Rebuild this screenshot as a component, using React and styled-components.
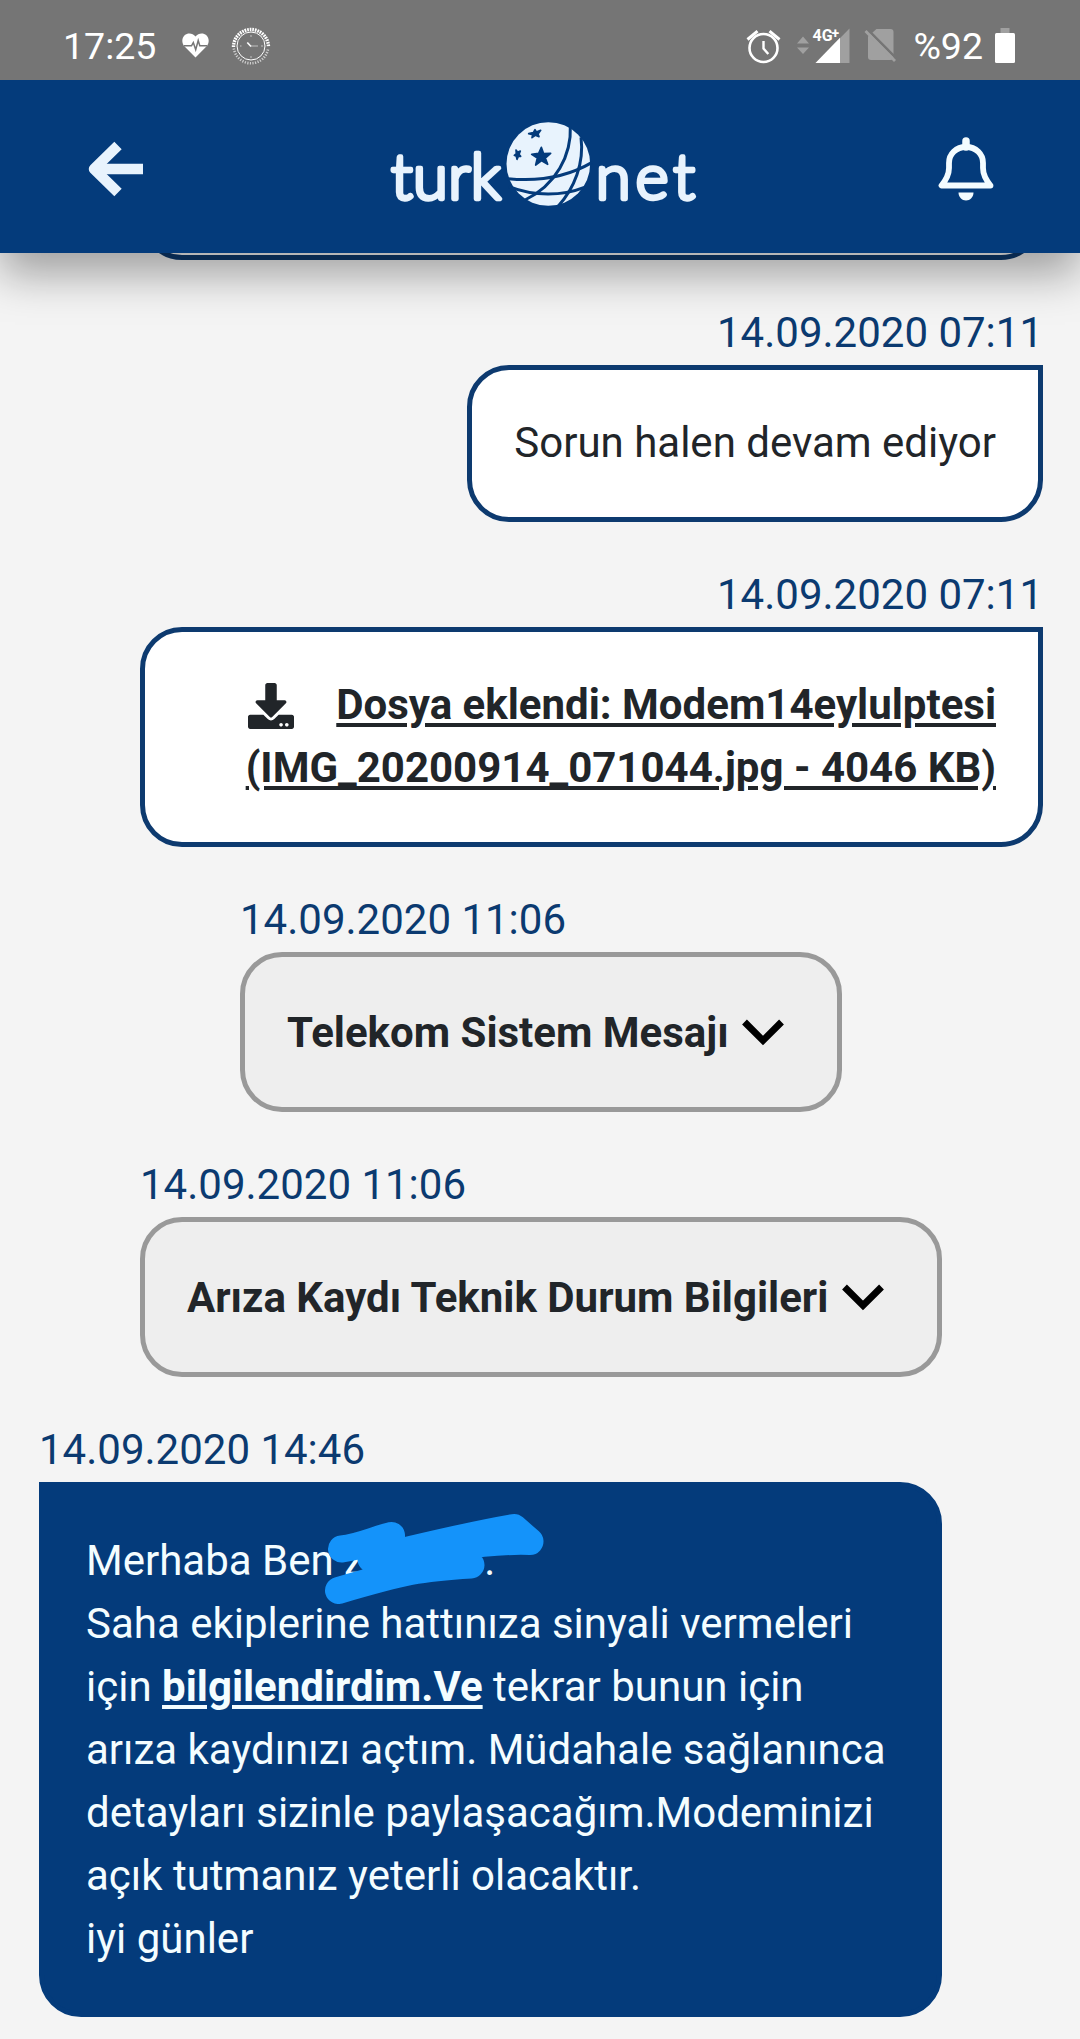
import styled, { createGlobalStyle } from "styled-components";
import { FaDownload } from "react-icons/fa";

const mesajlar = [
  { id: 1, tarih: "14.09.2020 07:11", tip: "musteri", icerik: "Sorun halen devam ediyor" },
  {
    id: 2,
    tarih: "14.09.2020 07:11",
    tip: "dosya",
    icerik: "Dosya eklendi: Modem14eylulptesi (IMG_20200914_071044.jpg - 4046 KB)",
  },
  { id: 3, tarih: "14.09.2020 11:06", tip: "sistem", girinti: 201, genislik: 602, icerik: "Telekom Sistem Mesajı" },
  { id: 4, tarih: "14.09.2020 11:06", tip: "sistem", girinti: 101, genislik: 802, icerik: "Arıza Kaydı Teknik Durum Bilgileri" },
  { id: 5, tarih: "14.09.2020 14:46", tip: "temsilci" },
];

const StatusBar = () => (
  <Status>
    <StatusGroup>
      <span>17:25</span>
      <HeartIcon width="27" height="25" viewBox="0 0 27 25">
        <path d="M13.5 24.5 2.6 13.6C-.6 10-.3 5 2.6 2.3 5.8-.6 10.700 0 13.5 3.500 16.300 0 21.200-.6 24.400 2.300 27.300 5 27.600 10 24.400 13.600Z" fill="#fff" />
        <path d="M2 12.800H9.500L11.300 9.600 13.700 16.600 16.200 7.500 17.800 12.800H25" fill="none" stroke="#757575" strokeWidth="1.500" />
      </HeartIcon>
      <WatchIcon width="40" height="40" viewBox="0 0 40 40" fill="none" stroke="#fff">
        <path d="M2.500 21A17.500 17.500 0 0 1 37.500 21" strokeWidth="3.400" strokeDasharray="1.700 .9" />
        <path d="M2.800 22.500A17.400 17.400 0 0 0 37.200 22.500" strokeWidth="2.600" strokeDasharray="1.200 1.400" opacity=".65" />
        <circle cx="20" cy="20" r="14" strokeWidth="1" />
        <path d="M20 20.500 16.300 16.500" strokeWidth="1.600" />
        <path d="M20 20H27M20 9V11M20 30V32M9 20H10.500M30 20H32" strokeWidth=".8" opacity=".7" />
      </WatchIcon>
    </StatusGroup>
    <StatusGroup>
      <svg width="36" height="36" viewBox="0 0 36 36" fill="none" stroke="#fff">
        <circle cx="17.500" cy="20" r="14" strokeWidth="2.600" />
        <path d="M17.500 13V20.500L22.300 26" strokeWidth="2.400" />
        <path d="M1.500 11.500 11.500 3.200M33.500 11.500 23.500 3.200" strokeWidth="3" />
      </svg>
      <SignalIcon width="53" height="36" viewBox="0 0 53 36">
        <path d="M0 15.500 6 8.500 12 15.500ZM0 19.500 6 26 12 19.500Z" fill="#a0a0a0" />
        <path d="M18.500 35 52.500 .5V35Z" fill="#a0a0a0" />
        <path d="M18.500 35 43 9.800V35Z" fill="#fff" />
        <text x="15.500" y="12.600" fontFamily="Roboto, sans-serif" fontSize="16" fontWeight="700" fill="#fff">
          4G<tspan dx="-1" dy="-2.500" fontSize="14">+</tspan>
        </text>
      </SignalIcon>
      <NoSimIcon width="33" height="35" viewBox="0 0 33 35">
        <path d="M4 8.500 12.500 1H26.500Q29.500 1 29.500 4V29Q29.500 32 26.500 32H7Q4 32 4 29Z" fill="#a0a0a0" />
        <path d="M3 1 33 31" stroke="#757575" strokeWidth="2.500" />
        <path d="M1.500 3 31 33" stroke="#a0a0a0" strokeWidth="2.800" />
      </NoSimIcon>
      <span>%92</span>
      <BatteryIcon width="20" height="35" viewBox="0 0 20 35">
        <path d="M5.500 0H14.500V6H5.500Z" fill="#a0a0a0" />
        <rect y="5" width="20" height="30" rx="1.500" fill="#fff" />
      </BatteryIcon>
    </StatusGroup>
  </Status>
);

const Logo = () => (
  <svg width="340" height="130" viewBox="0 0 1020 390">
    <LogoText x="60" y="297" textLength="330">turk</LogoText>
    <circle cx="532" cy="192" r="125.500" fill="#e8f3fd" />
    <g fill="none" stroke="#043b7b" strokeWidth="9">
      <path d="M598 78C602 165 555 255 462 300" />
      <path d="M630 112C640 190 610 265 562 318" />
      <path d="M410 236C510 246 590 230 662 188" />
      <path d="M414 260C490 290 575 288 640 262" />
    </g>
    <g fill="#043b7b" stroke="#043b7b" strokeWidth="5" strokeLinejoin="round">
      <path d="M511 142 518 161 539 160 523 174 530 193 512 182 494 195 499 174 482 163 503 160Z" />
      <path d="M492 89 496 96 509 91 501 102 504 110 493 106 483 113 485 104 473 101 487 98Z" />
      <path d="M435 150 440 157 448 153 444 163 449 169 442 169 438 178 436 169 430 166 436 161Z" />
    </g>
    <LogoText x="674" y="297" textLength="298">net</LogoText>
  </svg>
);

const Header = () => (
  <HeaderBar>
    <HeaderButton aria-label="Geri">
      <svg width="56" height="56" viewBox="0 0 56 56" fill="none" stroke="#e8f3fd" strokeWidth="10.500">
        <path d="M31 4.500 7 28 31 51.500" strokeLinejoin="round" />
        <path d="M9 28H56" />
      </svg>
    </HeaderButton>
    <Logo />
    <HeaderButton aria-label="Bildirimler">
      <svg width="56" height="64" viewBox="0 0 56 64">
        <path d="M28 10C18 10 11 17 11 26V31C11 38 8 43 3.500 48.500H52.500C48 43 45 38 45 31V26C45 17 38 10 28 10Z" fill="none" stroke="#f4fcff" strokeWidth="5.800" strokeLinejoin="round" />
        <path d="M28 4V10" stroke="#f4fcff" strokeWidth="7.500" strokeLinecap="round" />
        <path d="M20.500 55.500H35.500C35.500 60 32 63.500 28 63.500S20.500 60 20.500 55.500Z" fill="#f4fcff" />
      </svg>
    </HeaderButton>
  </HeaderBar>
);

const Chevron = () => (
  <ChevronIcon width="57" height="28" viewBox="0 0 57 28">
    <path d="M5.500 4 24 22.500 42.500 4" fill="none" stroke="#000" strokeWidth="6.800" />
  </ChevronIcon>
);

const MesajIcerik = ({ mesaj }) => {
  if (mesaj.tip === "dosya") {
    return (
      <CustomerBubble $full>
        <DownloadIcon />
        <FileLink>{mesaj.icerik}</FileLink>
      </CustomerBubble>
    );
  }
  if (mesaj.tip === "sistem") {
    return (
      <SystemBubble $width={mesaj.genislik}>
        {mesaj.icerik} <Chevron />
      </SystemBubble>
    );
  }
  if (mesaj.tip === "temsilci") {
    return (
      <AgentBubble>
        <p>Merhaba Ben Z<NameGap />.</p>
        <p>
          Saha ekiplerine hattınıza sinyali vermeleri için <strong>bilgilendirdim.Ve</strong> tekrar bunun için arıza
          kaydınızı açtım. Müdahale sağlanınca detayları sizinle paylaşacağım.Modeminizi açık tutmanız yeterli olacaktır.
        </p>
        <p>iyi günler</p>
        {/* marker drawn over the name */}
        <Marker width="240" height="100" viewBox="320 1505 240 100">
          <path d="M341.500 1550C360 1548 376 1540 391.500 1536.500L371 1560C420 1548 470 1536 514 1528.500L530 1542.500C480 1541 430 1552 385 1564L471 1566C420 1569 405 1572 338.500 1591.500" />
        </Marker>
      </AgentBubble>
    );
  }
  return <CustomerBubble>{mesaj.icerik}</CustomerBubble>;
};

const App = () => (
  <Page>
    <GlobalStyle />
    <StatusBar />
    <Header />
    <Messages>
      <PreviousBubble />
      {mesajlar.map((mesaj) => (
        <Message key={mesaj.id} $right={mesaj.tip === "musteri" || mesaj.tip === "dosya"} $indent={mesaj.girinti}>
          <DateText>{mesaj.tarih}</DateText>
          <MesajIcerik mesaj={mesaj} />
        </Message>
      ))}
    </Messages>
  </Page>
);
export default App;

const GlobalStyle = createGlobalStyle`
  *{
    box-sizing: border-box;
  }
  body{
    margin: 0;
    background-color: #f4f4f4;
    font-family: Roboto, "Liberation Sans", sans-serif;
  }
  p{
    margin: 0;
  }
`
const Page = styled.div`
  display: flex;
  flex-direction: column;
  width: 1080px;
  height: 2039px;
  overflow: hidden;
  background-color: #f4f4f4;
`
const Status = styled.div`
  display: flex;
  justify-content: space-between;
  flex-shrink: 0;
  height: 80px;
  padding: 12px 65px 0 63px;
  background-color: #757575;
  color: #fff;
  font-size: 37.5px;
  z-index: 2;
`
const StatusGroup = styled.div`
  display: flex;
  align-items: center;
  height: 67px;
`
const HeartIcon = styled.svg`
  margin-left: 26px;
`
const WatchIcon = styled.svg`
  margin-left: 22px;
`
const SignalIcon = styled.svg`
  margin-left: 15px;
  overflow: visible;
`
const NoSimIcon = styled.svg`
  margin: 0 16px 0 14px;
`
const BatteryIcon = styled.svg`
  margin-left: 12px;
`
const HeaderBar = styled.header`
  display: flex;
  justify-content: space-between;
  align-items: center;
  flex-shrink: 0;
  height: 173px;
  padding: 0 86px 3px 87px;
  background-color: #043b7b;
  box-shadow: 0 21px 42px rgba(0, 0, 0, 0.35);
  z-index: 1;
`
const HeaderButton = styled.button`
  display: flex;
  margin-top: 8px;
  padding: 0;
  border: none;
  background: none;
`
const LogoText = styled.text`
  font-family: Lato, sans-serif;
  font-size: 190px;
  font-weight: 300;
  fill: #e8f3fd;
  stroke: #e8f3fd;
  stroke-width: 13px;
  stroke-linejoin: round;
`
const Messages = styled.main`
  display: flex;
  flex-direction: column;
  gap: 42px;
  padding: 0 37px 0 39px;
  font-size: 42px;
  line-height: 63px;
`
const Message = styled.section`
  display: flex;
  flex-direction: column;
  align-items: ${({ $right }) => ($right ? "flex-end" : "flex-start")};
  padding-left: ${({ $indent }) => $indent || 0}px;
`
const DateText = styled.time`
  padding-bottom: 2px;
  color: #0b3a70;
  line-height: 61px;
`
const Bubble = styled.div`
  padding: 42px;
  border: 5px solid #0d3a6f;
  border-radius: 42px;
  color: #212529;
`
const CustomerBubble = styled(Bubble)`
  width: ${({ $full }) => ($full ? "903px" : "auto")};
  padding: 41px 42px 43px;
  border-top-right-radius: 0;
  background-color: #fff;
  text-align: right;
`
/* only the bottom of this one shows under the header */
const PreviousBubble = styled(CustomerBubble)`
  align-self: flex-end;
  width: 903px;
  height: 158px;
  margin-top: -151px;
`
const SystemBubble = styled(Bubble)`
  width: ${({ $width }) => $width}px;
  height: 160px;
  padding-top: 44px;
  border-color: #999;
  background-color: #eee;
  font-weight: 700;
  white-space: nowrap;
`
const AgentBubble = styled(Bubble)`
  position: relative;
  width: 903px;
  border-color: #043b7b;
  border-top-left-radius: 0;
  background-color: #043b7b;
  color: #f4fdff;
  strong{
    text-decoration: underline;
    text-decoration-thickness: 4px;
    text-underline-offset: 4px;
  }
`
const FileLink = styled.a`
  font-weight: 700;
  text-decoration: underline;
  text-decoration-thickness: 4px;
  text-underline-offset: 4px;
`
const DownloadIcon = styled(FaDownload)`
  width: 46px;
  height: 46px;
  margin-right: 42px;
  vertical-align: -10px;
`
const ChevronIcon = styled.svg`
  vertical-align: 1px;
`
const NameGap = styled.span`
  display: inline-block;
  width: 115px;
`
const Marker = styled.svg`
  position: absolute;
  left: 276px;
  top: 17px;
  path{
    fill: none;
    stroke: #1493fa;
    stroke-width: 27px;
    stroke-linecap: round;
    stroke-linejoin: round;
  }
`
